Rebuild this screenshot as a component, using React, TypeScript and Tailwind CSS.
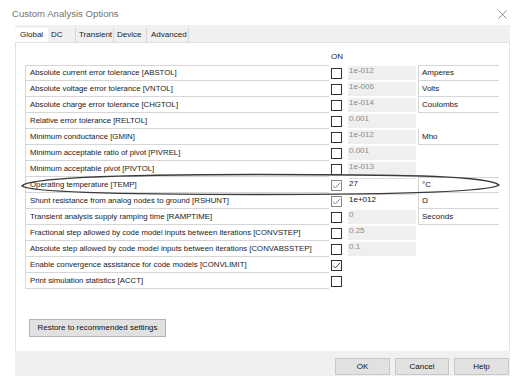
import React from "react";

type Row = {
  label: string;
  checked?: boolean;
  dim?: boolean;
  value?: string;
  enabled?: boolean;
  unit?: string;
};

const rows: Row[] = [
  { label: "Absolute current error tolerance [ABSTOL]", value: "1e-012", unit: "Amperes" },
  { label: "Absolute voltage error tolerance [VNTOL]", value: "1e-006", unit: "Volts" },
  { label: "Absolute charge error tolerance [CHGTOL]", value: "1e-014", unit: "Coulombs" },
  { label: "Relative error tolerance [RELTOL]", value: "0.001" },
  { label: "Minimum conductance [GMIN]", value: "1e-012", unit: "Mho" },
  { label: "Minimum acceptable ratio of pivot [PIVREL]", value: "0.001" },
  { label: "Minimum acceptable pivot [PIVTOL]", value: "1e-013" },
  { label: "Operating temperature [TEMP]", checked: true, dim: true, value: "27", enabled: true, unit: "°C" },
  { label: "Shunt resistance from analog nodes to ground [RSHUNT]", checked: true, dim: true, value: "1e+012", enabled: true, unit: "Ω" },
  { label: "Transient analysis supply ramping time [RAMPTIME]", value: "0", unit: "Seconds" },
  { label: "Fractional step allowed by code model inputs between iterations [CONVSTEP]", value: "0.25" },
  { label: "Absolute step allowed by code model inputs between iterations [CONVABSSTEP]", value: "0.1" },
  { label: "Enable convergence assistance for code models [CONVLIMIT]", checked: true },
  { label: "Print simulation statistics [ACCT]" },
];

function Check({ checked, dim }: { checked?: boolean; dim?: boolean }) {
  return (
    <div
      className={
        "w-[11px] h-[11px] border bg-white flex items-center justify-center " +
        (dim ? "border-[#8a8a8a]" : "border-[#333333]")
      }
    >
      {checked && (
        <svg width="9" height="9" viewBox="0 0 9 9">
          <path d="M1 4.5 L3.4 7 L8 1.8" fill="none" stroke={dim ? "#8a8a8a" : "#444"} strokeWidth="1" />
        </svg>
      )}
    </div>
  );
}

export default function App() {
  return (
    <div className="relative w-[524px] h-[387px] bg-white overflow-hidden font-['Liberation_Sans',Arial,sans-serif] text-[#1a1a1a]">
      {/* title bar */}
      <div className="h-[25px] flex items-center justify-between pl-[12px] pr-[17px] pt-[3px]">
        <span className="text-[9.6px] text-[#747474]">Custom Analysis Options</span>
        <svg width="9" height="9" viewBox="0 0 9 9">
          <path d="M0.5 0.5 L8.5 8.5 M8.5 0.5 L0.5 8.5" stroke="#707070" strokeWidth="0.8" />
        </svg>
      </div>

      {/* tabs */}
      <div className="ml-[15px] w-[495px] h-[18px] bg-[#f0f0f0] flex items-end border-b border-[#e2e2e2]">
        <div className="w-[33px] h-[14px] bg-white pl-[5px] text-[8px] leading-[14px]">Global</div>
        <div className="w-[28px] h-[14px] pl-[3px] text-[8px] leading-[14px] border-r border-[#d6d6d6]">DC</div>
        <div className="w-[38px] h-[14px] pl-[3px] text-[8px] leading-[14px] border-r border-[#d6d6d6]">Transient</div>
        <div className="w-[33px] h-[14px] pl-[3px] text-[8px] leading-[14px] border-r border-[#d6d6d6]">Device</div>
        <div className="w-[42px] h-[14px] pl-[4px] text-[8px] leading-[14px] border-r border-[#d6d6d6]">Advanced</div>
      </div>

      {/* panel */}
      <div className="ml-[15px] w-[495px] h-[308px] bg-white border-r border-l border-[#e4e4e4] flex flex-col pl-[9px]">
        <div className="h-[22px] flex items-end pb-[4px]">
          <div className="w-[306px]" />
          <span className="text-[8px] leading-[8px]">ON</span>
        </div>
        <div className="flex flex-col">
          {rows.map((r, i) => (
            <div key={i} className="flex h-[16px]">
              <div
                className={
                  "w-[304px] border-l border-b border-[#d6d6d6] pl-[4px] flex items-center text-[7.8px] whitespace-nowrap overflow-hidden " +
                  (i === 0 ? "border-t" : "")
                }
              >
                {r.label}
              </div>
              <div className="w-[19px] flex items-center pl-[2px]">
                <Check checked={r.checked} dim={r.dim} />
              </div>
              <div className="w-[68px] py-[1px]">
                {r.value !== undefined && (
                  <div
                    className={
                      "h-full pl-[1px] text-[8px] leading-[10px] " +
                      (r.enabled
                        ? "bg-white text-[#111] border-t border-[#dcdcdc]"
                        : "bg-[#efefef] text-[#8c8c8c]")
                    }
                  >
                    {r.value}
                  </div>
                )}
              </div>
              {r.unit !== undefined && (
                <div
                  className={
                    "ml-[2px] w-[81px] border-l border-b border-[#d6d6d6] pl-[3px] flex items-center text-[8px] " +
                    (i === 0 || r.unit === "°C" ? "border-t" : "")
                  }
                >
                  {r.unit}
                </div>
              )}
            </div>
          ))}
        </div>
        <div className="mt-[24px] ml-[4px]">
          <button className="w-[137px] h-[18px] bg-[#e1e1e1] border border-[#b4b4b4] text-[8px] text-[#111]">
            Restore to recommended settings
          </button>
        </div>
      </div>

      {/* bottom bar */}
      <div className="ml-[15px] w-[495px] h-[25px] bg-[#f0f0f0] flex justify-end items-end gap-[5px] pb-[1px] pr-[1px]">
        <button className="w-[55px] h-[17px] bg-[#e1e1e1] border border-[#c8c8c8] text-[8px] text-[#111]">OK</button>
        <button className="w-[54px] h-[17px] bg-[#e1e1e1] border border-[#c8c8c8] text-[8px] text-[#111]">Cancel</button>
        <button className="w-[55px] h-[17px] bg-[#e1e1e1] border border-[#c8c8c8] text-[8px] text-[#111]">Help</button>
      </div>

      {/* annotation ellipse */}
      <svg className="absolute left-0 top-0 pointer-events-none" width="524" height="387" viewBox="0 0 524 387">
        <path
          d="M22 186 C 28 178, 110 174.5, 260 174.5 C 420 174.5, 488 176.5, 499 185 C 490 191, 420 194.5, 260 194.5 C 110 194.5, 30 192, 22 186 Z"
          fill="none"
          stroke="#3a3a3a"
          strokeWidth="1.4"
        />
      </svg>
    </div>
  );
}
